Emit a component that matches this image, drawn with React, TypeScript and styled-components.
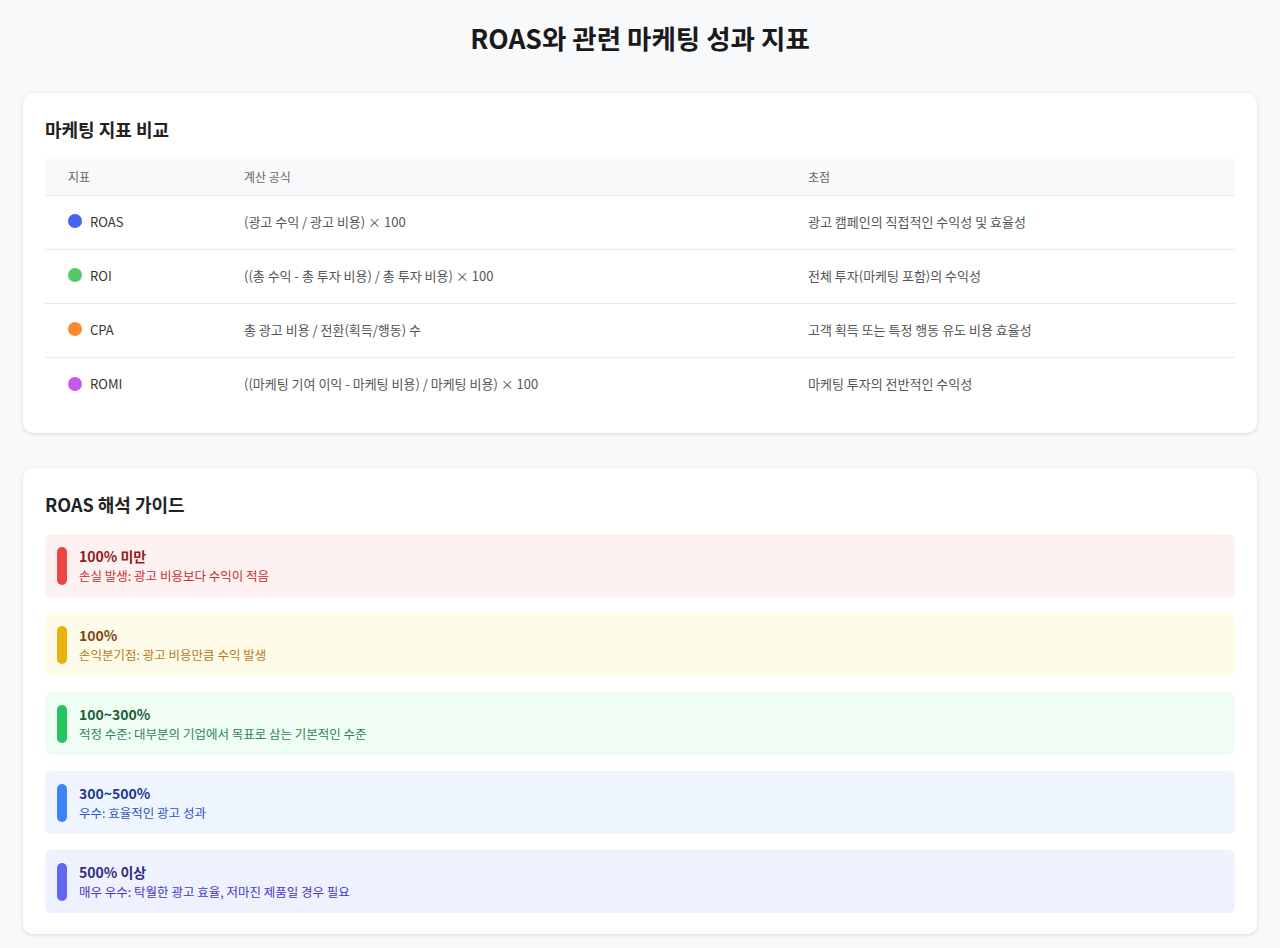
import React from 'react';
import styled, { createGlobalStyle } from 'styled-components';

const GlobalStyle = createGlobalStyle`
  *, *::before, *::after {
    box-sizing: border-box;
  }
  html, body {
    margin: 0;
    padding: 0;
    background: #f8f9fb;
    font-family: "Noto Sans CJK KR", "Noto Sans", sans-serif;
    color: #222;
  }
`

const Page = styled.div`
  padding: 21px 23px 14px;
  display: flex;
  flex-direction: column;
  gap: 35px;
`
const Title = styled.h1`
  margin: 0 0 3px;
  text-align: center;
  font-size: 26.5px;
  line-height: 34px;
  font-weight: 700;
  color: #1a1a1a;
`
const Card = styled.section`
  background: #ffffff;
  border-radius: 10px;
  box-shadow: 0 1px 4px rgba(0, 0, 0, 0.12);
  padding: 22px 22px 21px;
`
const CardTitle = styled.h2`
  margin: 0 0 16px;
  font-size: 18px;
  line-height: 28px;
  font-weight: 700;
  color: #222;
`
const Table = styled.div`
  display: grid;
  grid-template-columns: 176px 564px 1fr;
`
const HeadCell = styled.div`
  background: #f8f9fb;
  padding: 10px 23px;
  font-size: 12px;
  line-height: 16px;
  color: #666;
  border-bottom: 1px solid #e6e8eb;
`
const Cell = styled.div<{ $last?: boolean }>`
  height: 54px;
  padding: 0 23px 3px;
  display: flex;
  align-items: center;
  gap: 8px;
  font-size: 13px;
  color: #555;
  border-bottom: ${p => (p.$last ? 'none' : '1px solid #e9eaec')};
`
const Name = styled.span`
  color: #333;
  font-size: 13px;
`
const Dot = styled.span<{ $color: string }>`
  width: 14px;
  height: 14px;
  border-radius: 50%;
  background: ${p => p.$color};
  flex-shrink: 0;
`
const GuideList = styled.div`
  display: flex;
  flex-direction: column;
  gap: 16px;
`
const GuideItem = styled.div<{ $bg: string }>`
  height: 63px;
  display: flex;
  align-items: center;
  gap: 12px;
  padding: 12px;
  border-radius: 6px;
  background: ${p => p.$bg};
`
const Bar = styled.div<{ $color: string }>`
  width: 10px;
  height: 38px;
  border-radius: 5px;
  background: ${p => p.$color};
  flex-shrink: 0;
`
const GuideText = styled.div`
  display: flex;
  flex-direction: column;
`
const GuideTitle = styled.div<{ $color: string }>`
  font-size: 14px;
  line-height: 20px;
  font-weight: 700;
  color: ${p => p.$color};
`
const GuideDesc = styled.div<{ $color: string }>`
  font-size: 12.5px;
  line-height: 19px;
  color: ${p => p.$color};
`

const metrics = [
  { name: 'ROAS', color: '#4a63e8', formula: '(광고 수익 / 광고 비용) × 100', focus: '광고 캠페인의 직접적인 수익성 및 효율성' },
  { name: 'ROI', color: '#55c867', formula: '((총 수익 - 총 투자 비용) / 총 투자 비용) × 100', focus: '전체 투자(마케팅 포함)의 수익성' },
  { name: 'CPA', color: '#fb8c2e', formula: '총 광고 비용 / 전환(획득/행동) 수', focus: '고객 획득 또는 특정 행동 유도 비용 효율성' },
  { name: 'ROMI', color: '#c65ae6', formula: '((마케팅 기여 이익 - 마케팅 비용) / 마케팅 비용) × 100', focus: '마케팅 투자의 전반적인 수익성' },
]

const guides = [
  { title: '100% 미만', desc: '손실 발생: 광고 비용보다 수익이 적음', bg: '#fef1f1', bar: '#ef4444', tc: '#8f1d1d', dc: '#c53030' },
  { title: '100%', desc: '손익분기점: 광고 비용만큼 수익 발생', bg: '#fefce9', bar: '#e8b10c', tc: '#7c4a12', dc: '#b7791f' },
  { title: '100~300%', desc: '적정 수준: 대부분의 기업에서 목표로 삼는 기본적인 수준', bg: '#effdf4', bar: '#22c55e', tc: '#1f5f3a', dc: '#2f855a' },
  { title: '300~500%', desc: '우수: 효율적인 광고 성과', bg: '#eff5ff', bar: '#3b82f6', tc: '#1e3a8a', dc: '#2b55c4' },
  { title: '500% 이상', desc: '매우 우수: 탁월한 광고 효율, 저마진 제품일 경우 필요', bg: '#eef1fe', bar: '#6366f1', tc: '#312e81', dc: '#4338ca' },
]

export default function App() {
  return <>
    <GlobalStyle/>
    <Page>
      <Title>ROAS와 관련 마케팅 성과 지표</Title>

      <Card>
        <CardTitle>마케팅 지표 비교</CardTitle>
        <Table>
          <HeadCell>지표</HeadCell>
          <HeadCell>계산 공식</HeadCell>
          <HeadCell>초점</HeadCell>
          {metrics.map((m, i) => {
            const last = i === metrics.length - 1
            return <React.Fragment key={m.name}>
              <Cell $last={last}><Dot $color={m.color}/><Name>{m.name}</Name></Cell>
              <Cell $last={last}>{m.formula}</Cell>
              <Cell $last={last}>{m.focus}</Cell>
            </React.Fragment>
          })}
        </Table>
      </Card>

      <Card>
        <CardTitle>ROAS 해석 가이드</CardTitle>
        <GuideList>
          {guides.map(g => (
            <GuideItem key={g.title} $bg={g.bg}>
              <Bar $color={g.bar}/>
              <GuideText>
                <GuideTitle $color={g.tc}>{g.title}</GuideTitle>
                <GuideDesc $color={g.dc}>{g.desc}</GuideDesc>
              </GuideText>
            </GuideItem>
          ))}
        </GuideList>
      </Card>
    </Page>
  </>
}
